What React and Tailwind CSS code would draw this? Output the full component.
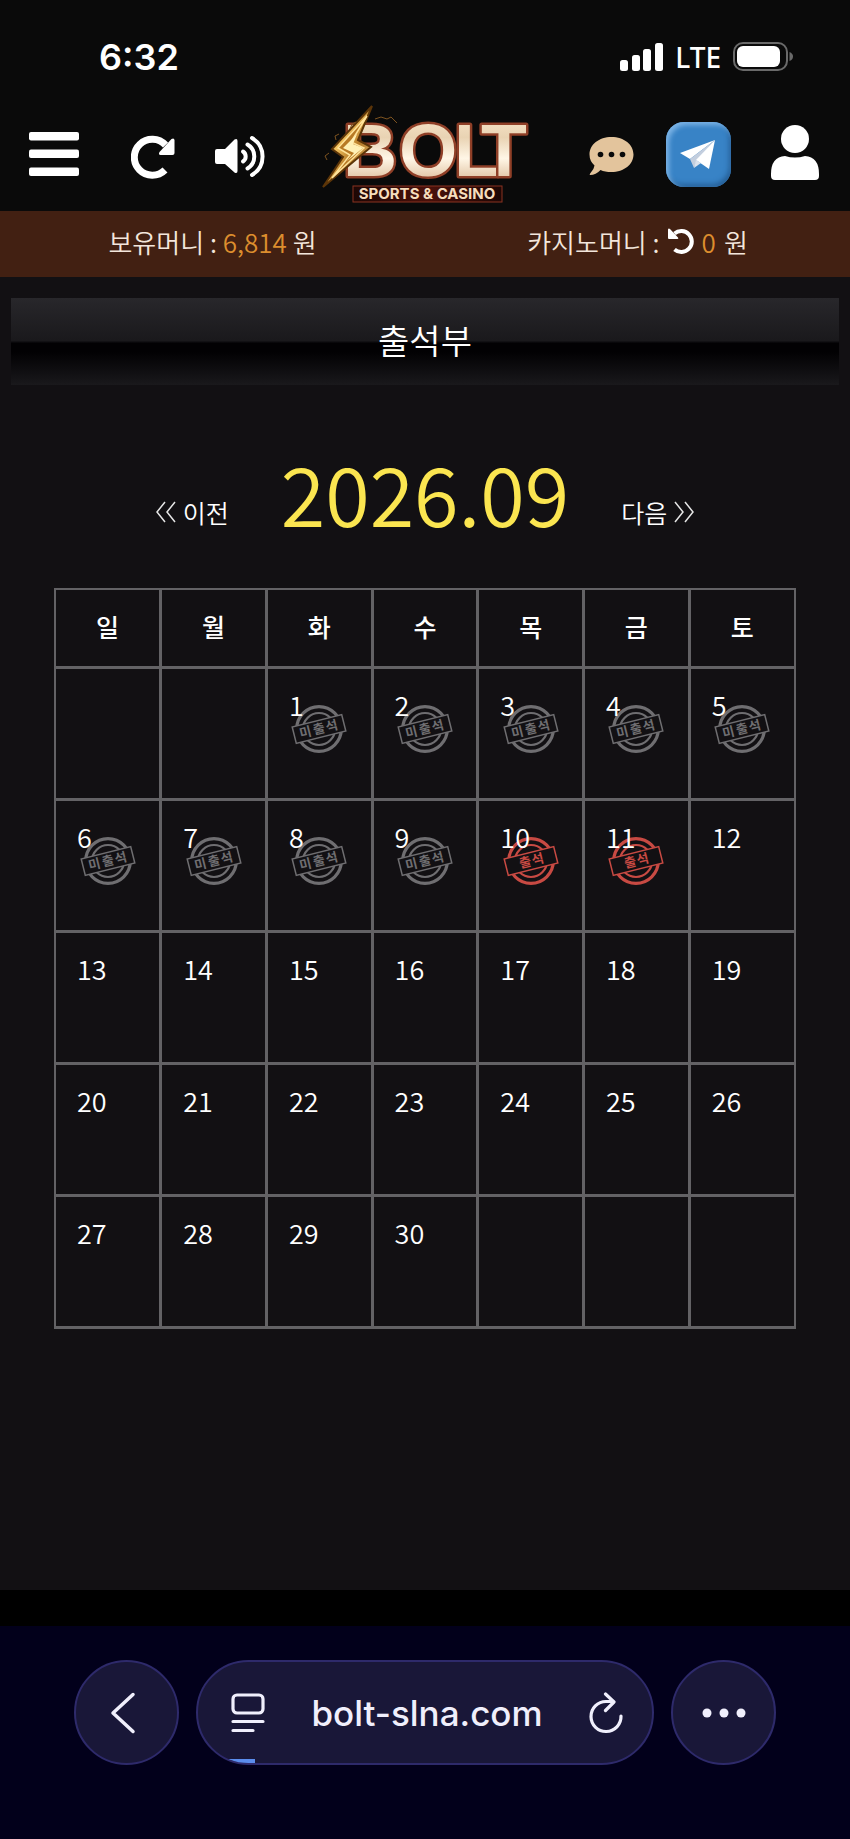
const WEEKDAYS = ['일', '월', '화', '수', '목', '금', '토'];
const FIRST_WEEKDAY = 2;
const DAYS_IN_MONTH = 30;
const ATTENDED = [10, 11];
const MISSED = [1, 2, 3, 4, 5, 6, 7, 8, 9];

function buildWeeks() {
  const cells = Array(FIRST_WEEKDAY).fill(null);
  for (let day = 1; day <= DAYS_IN_MONTH; day++) cells.push(day);
  while (cells.length % 7 !== 0) cells.push(null);

  const weeks = [];
  for (let i = 0; i < cells.length; i += 7) weeks.push(cells.slice(i, i + 7));
  return weeks;
}

function StatusBar() {
  return (
    <div className="flex items-center justify-between pl-[99px] pr-[57px] pt-8 pb-[22px]">
      <span className="font-['Inter',sans-serif] text-4xl leading-[50px] font-semibold">6:32</span>
      <div className="flex items-center">
        <svg width="43" height="28" viewBox="0 0 43 28" fill="#fff">
          <rect x="0" y="17" width="8" height="11" rx="2.500" />
          <rect x="12" y="12" width="8" height="16" rx="2.500" />
          <rect x="23" y="6" width="8" height="22" rx="2.500" />
          <rect x="35" y="0" width="8" height="28" rx="2.500" />
        </svg>
        <span className="mx-3 font-['Noto_Sans',sans-serif] text-[28px] leading-8 font-medium">LTE</span>
        <svg width="60" height="30" viewBox="0 0 60 30">
          <rect x="1" y="1" width="53" height="27" rx="9" fill="none" stroke="#6a6a6a" strokeWidth="2" />
          <rect x="4" y="4" width="43" height="21" rx="6" fill="#fff" />
          <path d="M56.500 10 Q60 11.500 60 14.500 Q60 17.500 56.500 19 Z" fill="#6a6a6a" />
        </svg>
      </div>
    </div>
  );
}

function Logo() {
  return (
    <svg width="212" height="100" viewBox="0 0 212 100" role="img" aria-label="BOLT Sports & Casino">
      <defs>
        <linearGradient id="letter" x1="0" y1="0" x2="0" y2="1">
          <stop offset="0" stopColor="#fbe9cf" />
          <stop offset="0.35" stopColor="#e9d3b3" />
          <stop offset="0.6" stopColor="#fff6e6" />
          <stop offset="1" stopColor="#cfa67c" />
        </linearGradient>
        <linearGradient id="gold" x1="0" y1="0" x2="1" y2="1">
          <stop offset="0" stopColor="#8a5a1c" />
          <stop offset="0.4" stopColor="#f2c25e" />
          <stop offset="0.6" stopColor="#b57a28" />
          <stop offset="1" stopColor="#f7d98a" />
        </linearGradient>
        <linearGradient id="plate" x1="0" y1="0" x2="1" y2="0">
          <stop offset="0" stopColor="#1d0705" />
          <stop offset="0.5" stopColor="#4a110b" />
          <stop offset="1" stopColor="#1d0705" />
        </linearGradient>
      </defs>
      <text
        x="22 78 133 160"
        y="72"
        fontFamily="Liberation Sans, sans-serif"
        fontWeight="700"
        fontSize="75"
        fill="url(#letter)"
        stroke="#8f3f27"
        strokeWidth="5"
        strokeLinejoin="round"
        paintOrder="stroke"
      >
        BOLT
      </text>
      <path d="M51 2 L11 45 L22 53 L2 83 L50 43 L37 36 Z" fill="url(#gold)" stroke="#5c3508" strokeWidth="2" />
      <path d="M46 12 L17 44 L29 51 L11 74 L43 44 L30 38 Z" fill="#b87a25" stroke="#ffe39a" strokeWidth="1.500" />
      <path d="M36 30 L22 44 L33 49 L26 57 L42 44 L32 40 Z" fill="#fff0b5" />
      <path d="M35 18 L31 20 L29 25 M54 15 L60 13 L66 15 L70 13 L76 19 M18 30 L14 32 L15 36 M8 49 L4 52 L6 56" stroke="#7d5320" strokeWidth="1" fill="none" />
      <rect x="32" y="82" width="149" height="16" fill="url(#plate)" stroke="#8a3220" strokeWidth="1" />
      <text x="106" y="95" textAnchor="middle" fontFamily="Inter, sans-serif" fontWeight="700" fontSize="15" fill="#f6ddbd">SPORTS &amp; CASINO</text>
    </svg>
  );
}

function Header() {
  return (
    <header className="flex items-center justify-between pl-[29px] pr-[31px] pb-[7px]">
      <div className="flex items-center gap-10">
        <button type="button" aria-label="메뉴">
          <svg width="50" height="44" viewBox="0 0 50 44" fill="#fff">
            <rect x="0" y="0" width="50" height="8.500" rx="2" />
            <rect x="0" y="17.500" width="50" height="8.500" rx="2" />
            <rect x="0" y="35.500" width="50" height="8.500" rx="2" />
          </svg>
        </button>
        <button type="button" aria-label="새로고침" className="ml-3">
          <svg width="44" height="50" viewBox="0 0 44 50">
            <path d="M34.500 16 A18 18 0 1 0 34 41" fill="none" stroke="#fff" strokeWidth="7" />
            <path d="M43.500 11 V24 Q43.500 26 41.500 26 H29.500 Q27 25.500 28.500 23 L40.500 10 Q43 8.500 43.500 11 Z" fill="#fff" />
          </svg>
        </button>
        <button type="button" aria-label="소리">
          <svg width="50" height="52" viewBox="0 -2 50 52">
            <path d="M2 19 H10 L19.500 9.500 Q22.500 8 22.500 11 V41 Q22.500 44 19.500 42.500 L10 34 H2 Q0 34 0 32 V21 Q0 19 2 19 Z" fill="#fff" />
            <g fill="none" stroke="#fff" strokeWidth="4" strokeLinecap="round">
              <path d="M28 21.500 A6 6 0 0 1 28 31.500" />
              <path d="M32.500 14.500 A14 14 0 0 1 32.500 38.500" />
              <path d="M37 8 A21.500 21.500 0 0 1 37 45" />
            </g>
          </svg>
        </button>
      </div>
      <Logo />
      <div className="flex items-center gap-8">
        <button type="button" aria-label="문의">
          <svg width="45" height="46" viewBox="0 0 45 46">
            <path d="M22.500 6 C35 6 44.500 13.500 44.500 23.500 C44.500 33.500 35 41 22.500 41 C18 41 14.500 40.500 11.500 39 Q7 44 1 44 Q0 43.500 1.500 42 Q5 38.500 5.500 34.500 Q0.500 30 0.500 23.500 C0.500 13.500 10 6 22.500 6 Z" fill="#e3c49c" />
            <circle cx="11.500" cy="23.500" r="2.800" fill="#0a0a0a" />
            <circle cx="22.500" cy="23.500" r="2.800" fill="#0a0a0a" />
            <circle cx="33.500" cy="23.500" r="2.800" fill="#0a0a0a" />
          </svg>
        </button>
        <a href="#telegram" aria-label="텔레그램" className="rounded-[18px] bg-[#3883c6] shadow-[inset_3px_3px_5px_#7db4e6,inset_-2px_-3px_5px_#265f97]">
          <svg width="65" height="65" viewBox="0 0 65 65">
            <path d="M49 18 L14 31 L24 37 Z" fill="#fff" />
            <path d="M49 18 L24 37 L28 46 L31 38 Z" fill="#c3cede" />
            <path d="M49 18 L30 38 L43 47 Z" fill="#fff" />
            <path d="M28 46 L30 38 L35 41 Z" fill="#dbe2ec" />
          </svg>
        </a>
        <button type="button" aria-label="내 정보" className="ml-2">
          <svg width="48" height="60" viewBox="0 0 48 60" fill="#fff">
            <circle cx="24" cy="15" r="14" />
            <path d="M14 32 Q24 35 34 32 Q48 33 48 50 V52 Q48 56 44 56 H4 Q0 56 0 52 V50 Q0 33 14 32 Z" />
          </svg>
        </button>
      </div>
    </header>
  );
}

function Balance() {
  return (
    <div className="flex items-center bg-[#422012] pb-1 text-[26px] leading-[62px] font-[350] text-[#f3e6dc]">
      <p className="flex-1 text-center">
        보유머니 : <span className="text-[#dd8e2e]">6,814</span> 원
      </p>
      <p className="flex flex-1 items-center justify-center gap-2">
        <span>카지노머니 :</span>
        <button type="button" aria-label="카지노머니 새로고침">
          <svg width="26" height="28" viewBox="0 0 26 28">
            <path d="M6.500 5.500 A10.500 10.500 0 1 1 6.500 21.500" fill="none" stroke="#fff" strokeWidth="4" />
            <path d="M0 1.500 V10 Q0 11 1 11 H9.500 Q11 10.500 10 9.500 L2 1 Q0.500 0 0 1.500 Z" fill="#fff" />
          </svg>
        </button>
        <span className="text-[#dd8e2e]">0</span>
        <span>원</span>
      </p>
    </div>
  );
}

function Stamp({ attended }) {
  const color = attended ? '#c84a43' : '#6f6e71';
  return (
    <svg width="56" height="50" viewBox="-28 -25 56 50" className="absolute top-[35px] left-1/2 -translate-x-1/2">
      <circle r="22.300" fill="none" stroke={color} strokeWidth="3.200" />
      <circle r="16" fill="none" stroke={color} strokeWidth="2.200" />
      <g transform="rotate(-14)">
        <rect x="-25.500" y="-8.500" width="51" height="17" fill="#121013" stroke={color} strokeWidth="1.500" />
        <text x={attended ? '-12 1' : '-20 -6 7'} y="4.500" fontSize="13" fontWeight="700" fill={color}>
          {attended ? '출석' : '미출석'}
        </text>
      </g>
    </svg>
  );
}

function Calendar() {
  return (
    <table className="w-full table-fixed border-collapse">
      <thead>
        <tr className="h-[78px]">
          {WEEKDAYS.map((name) => (
            <th key={name} className="border-[3px] border-t-2 border-[#636265] pb-1 text-[25px] leading-9 font-medium first:border-l-2 last:border-r-2">
              {name}
            </th>
          ))}
        </tr>
      </thead>
      <tbody>
        {buildWeeks().map((week, row) => (
          <tr key={row} className="h-33">
            {week.map((day, col) => (
              <td key={col} className="relative border-[3px] border-[#636265] px-[21px] pt-[18px] align-top text-[27px] leading-9 font-[350] first:border-l-2 last:border-r-2">
                {(ATTENDED.includes(day) || MISSED.includes(day)) && <Stamp attended={ATTENDED.includes(day)} />}
                {day && <span className="relative">{day}</span>}
              </td>
            ))}
          </tr>
        ))}
      </tbody>
    </table>
  );
}

function Chevrons({ flip }) {
  return (
    <svg width="22" height="22" viewBox="0 0 22 22" fill="none" stroke="#e6e6e6" strokeWidth="1.500" className={flip ? 'rotate-180' : ''}>
      <path d="M10 1 L2 11 L10 21 M20 1 L12 11 L20 21" />
    </svg>
  );
}

function BrowserBar() {
  const glass = 'border-2 border-[#2e2a6b] bg-[#191738]';
  return (
    <footer className="border-t-[36px] border-black bg-[#02001b] px-[74px] pt-[34px] pb-[74px] text-[#f0effc]">
      <div className="flex gap-[17px]">
        <button type="button" aria-label="뒤로" className={`flex size-[105px] shrink-0 items-center justify-center rounded-full ${glass}`}>
          <svg width="30" height="42" viewBox="0 0 30 42" className="mr-1" fill="none" stroke="currentColor" strokeWidth="3.500" strokeLinecap="round" strokeLinejoin="round">
            <path d="M23 2.500 L3 21 L23 39.500" />
          </svg>
        </button>
        <div className={`relative flex min-w-0 flex-1 items-center justify-between overflow-hidden rounded-full pr-[29px] pl-[33px] ${glass}`}>
          <button type="button" aria-label="페이지 메뉴">
            <svg width="34" height="40" viewBox="0 0 34 40" fill="none" stroke="currentColor" strokeWidth="3.200" strokeLinecap="round">
              <rect x="2" y="2" width="30" height="18" rx="4" />
              <path d="M2 28.500 H32 M2 37.500 H22" />
            </svg>
          </button>
          <button type="button" className="font-['Inter',sans-serif] text-[35px] leading-10 font-medium">bolt-slna.com</button>
          <button type="button" aria-label="다시 로드">
            <svg width="34" height="42" viewBox="0 0 34 42" fill="none" stroke="currentColor" strokeWidth="3.200" strokeLinecap="round" strokeLinejoin="round">
              <path d="M24 9.500 H17 A15 15 0 1 0 32 24" />
              <path d="M16.500 2 L25 10 L16.500 18.500" />
            </svg>
          </button>
          <span className="absolute bottom-0 left-0 h-1 w-[57px] bg-[#5b8ded]" />
        </div>
        <button type="button" aria-label="더보기" className={`flex size-[105px] shrink-0 items-center justify-center rounded-full ${glass}`}>
          <svg width="44" height="10" viewBox="0 0 44 10" fill="currentColor">
            <circle cx="5" cy="5" r="4.500" />
            <circle cx="22" cy="5" r="4.500" />
            <circle cx="39" cy="5" r="4.500" />
          </svg>
        </button>
      </div>
    </footer>
  );
}

export default function App() {
  return (
    <div className="flex min-h-screen flex-col bg-[#121013] font-['Noto_Sans_CJK_KR',sans-serif] text-white">
      <div className="bg-[#0a0a0a]">
        <StatusBar />
        <Header />
      </div>
      <Balance />
      <main className="flex-1 pb-20">
        <h1 className="mx-[11px] mt-[21px] bg-[linear-gradient(#28272b_0%,#1a191c_49%,#020103_52%,#020103_62%,#171619_96%,#1a191c_100%)] pb-1 text-center text-[34px] leading-[83px] font-[350]">
          출석부
        </h1>
        <div className="mt-[57px] flex items-end justify-center gap-[52px]">
          <a href="#prev" className="flex items-center gap-1.5 pb-[14px] text-[25px] leading-8 font-[350]">
            <Chevrons />
            이전
          </a>
          <h2 className="text-[81px] leading-[100px] font-[350] text-[#fbe550]">2026.09</h2>
          <a href="#next" className="flex items-center gap-1.5 pb-[14px] text-[25px] leading-8 font-[350]">
            다음
            <Chevrons flip />
          </a>
        </div>
        <div className="mx-[54px] mt-[46px]">
          <Calendar />
        </div>
      </main>
      <BrowserBar />
    </div>
  );
}
